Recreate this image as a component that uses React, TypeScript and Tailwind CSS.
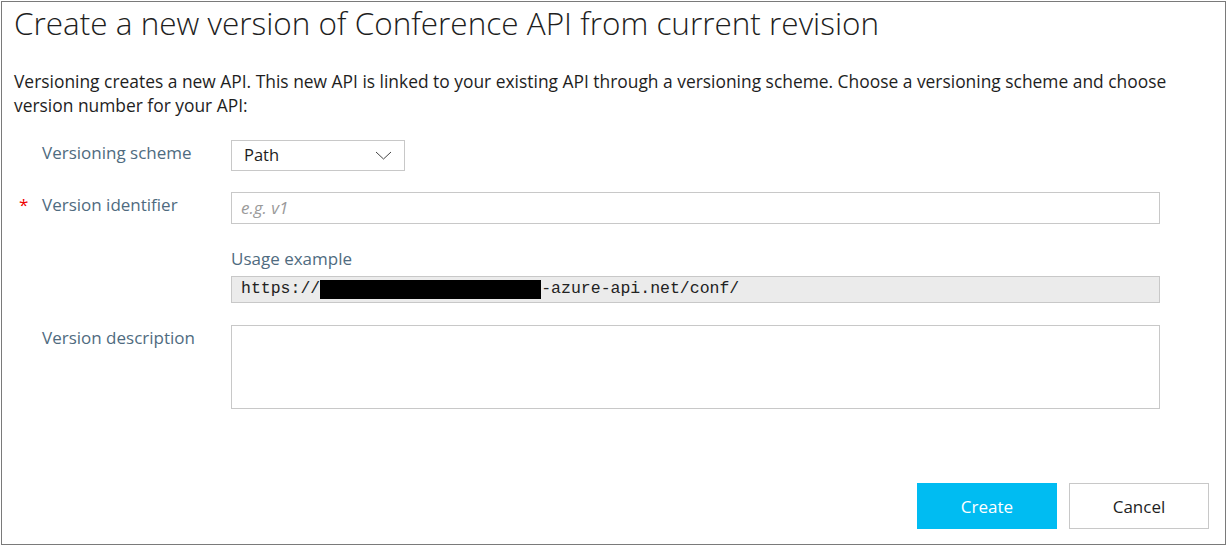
export default function App() {
  const label = "text-[17px] text-[#4f6b80] leading-6";
  return (
    <div className="w-[1227px] h-[547px] bg-white pt-[1px] pl-[1px]" style={{ fontFamily: '"Open Sans", "Noto Sans", sans-serif' }}>
      <div className="w-[1225px] h-[544px] border border-[#7a7a7a] flex flex-col">
        <h1 className="pl-[12px] pt-[2px] text-[31.5px] font-light leading-[38px] text-[#1e1e1e]">
          Create a new version of Conference API from current revision
        </h1>
        <p className="pl-[12px] pr-[44px] mt-[27px] text-[17.4px] leading-6 text-[#1e1e1e]">
          Versioning creates a new API. This new API is linked to your existing API through a versioning scheme. Choose a versioning scheme and choose version number for your API:
        </p>

        <div className="mt-[23px] flex items-start">
          <div className="w-[229px] pl-[40px] pt-[1px]">
            <span className={label}>Versioning scheme</span>
          </div>
          <div className="w-[174px] h-[31px] border border-[#c8c8c8] flex items-center justify-between pl-[12px] pr-[12px]">
            <span className="text-[16.5px] text-[#1e1e1e]">Path</span>
            <svg width="17" height="9" viewBox="0 0 17 9" fill="none" stroke="#444" strokeWidth="1">
              <path d="M1 1l7.5 7 7.5-7" />
            </svg>
          </div>
        </div>

        <div className="mt-[21px] flex items-start">
          <div className="w-[229px] pt-[1px] flex">
            <span className="w-[40px] pl-[17px] text-[17px] text-[#e00] leading-6">*</span>
            <span className={label}>Version identifier</span>
          </div>
          <div className="w-[929px] h-[32px] border border-[#c8c8c8] flex items-center pl-[9px]">
            <span className="text-[17px] italic text-[#9a9a9a]">e.g. v1</span>
          </div>
        </div>

        <div className="mt-[23px] ml-[229px]">
          <div className={label}>Usage example</div>
          <div className="mt-[5px] w-[929px] h-[27px] border border-[#c8c8c8] bg-[#ebebeb] flex items-center pl-[9px] text-[16.5px] text-[#222]" style={{ fontFamily: '"Liberation Mono", monospace' }}>
            <span>https://</span>
            <span className="inline-block w-[221px] h-[19px] bg-black" />
            <span>-azure-api.net/conf/</span>
          </div>
        </div>

        <div className="mt-[22px] flex items-start">
          <div className="w-[229px] pl-[40px] pt-[1px]">
            <span className={label}>Version description</span>
          </div>
          <div className="w-[929px] h-[84px] border border-[#c8c8c8]" />
        </div>

        <div className="mt-auto mb-[15px] flex justify-end gap-[12px] pr-[16px]">
          <button className="w-[140px] h-[46px] pt-[2px] bg-[#00bcf2] text-white text-[17px]">Create</button>
          <button className="w-[140px] h-[46px] pt-[2px] border border-[#c8c8c8] bg-white text-[#1e1e1e] text-[17px]">Cancel</button>
        </div>
      </div>
    </div>
  );
}
